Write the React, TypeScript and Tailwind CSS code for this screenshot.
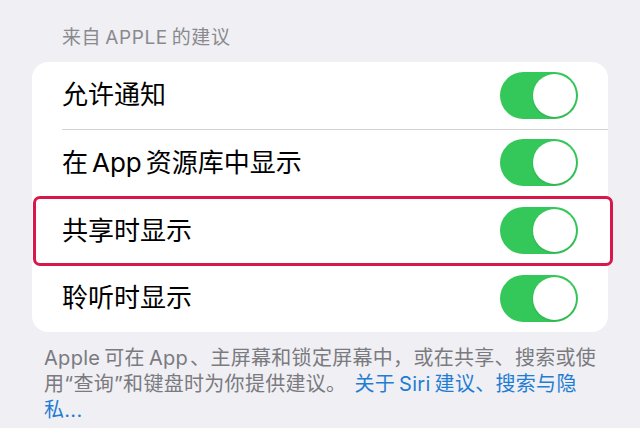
import { ReactNode } from "react";

// iOS puts a little air between CJK and Latin runs
const L = ({ children, l = 3, r = 3 }: { children: ReactNode; l?: number; r?: number }) => (
  <span style={{ marginLeft: l, marginRight: r }}>{children}</span>
);

const rows: { key: string; label: ReactNode; marked?: boolean }[] = [
  { key: "notify", label: "允许通知" },
  {
    key: "library",
    label: (
      <>
        在<L l={4} r={4}>App</L>资源库中显示
      </>
    ),
  },
  { key: "share", label: "共享时显示", marked: true },
  { key: "listen", label: "聆听时显示" },
];

const Toggle = () => (
  <div className="w-[78px] h-[47px] rounded-full bg-[#34c759] p-[2px] flex justify-end">
    <div className="w-[43px] h-[43px] rounded-full bg-white shadow-[0_1px_2px_rgba(0,0,0,0.12)]" />
  </div>
);

export default function App() {
  return (
    <div
      className="w-[640px] h-[428px] overflow-hidden bg-[#efeff4]"
      style={{ fontFamily: 'Inter, "Noto Sans CJK SC", sans-serif' }}
    >
      <div className="pl-[62px] pt-[26px] mb-[12px] text-[19px] leading-[24px] tracking-[0.6px] text-[#8a8a8e]">
        来自<L l={4} r={4}>APPLE</L>的建议
      </div>

      <div className="ml-[32px] w-[576px] rounded-[16px] bg-white">
        {rows.map((row, i) => (
          <div key={row.key} className="relative h-[67.5px] pl-[30px] flex">
            <div
              className={
                "flex-1 flex items-center justify-between pr-[30px] " +
                (i < rows.length - 1 ? "border-b border-[#d1d1d6]" : "")
              }
            >
              <span className="text-[26px] leading-none text-black">{row.label}</span>
              <Toggle />
            </div>
            {row.marked && (
              <div className="absolute left-[1px] -right-[5px] -top-[1px] -bottom-[1px] rounded-[7px] border-[3px] border-[#d8174b] bg-white flex pl-[26px] pr-[32px] items-center justify-between">
                <span className="text-[26px] leading-none text-black">{row.label}</span>
                <Toggle />
              </div>
            )}
          </div>
        ))}
      </div>

      <div className="pl-[44px] pr-[20px] pt-[13px] text-[20px] leading-[26px] tracking-[0.3px] text-[#7a7a7f] whitespace-nowrap">
        <L l={0} r={4}>Apple</L>可在<L l={4} r={2}>App</L>、主屏幕和锁定屏幕中，或在共享、搜索或使
        <br />
        用“查询”和键盘时为你提供建议。
        <span className="ml-[8px] text-[#1f7dd3]">
          关于<L l={4} r={4}>Siri</L>建议、搜索与隐
          <br />
          私...
        </span>
      </div>
    </div>
  );
}
